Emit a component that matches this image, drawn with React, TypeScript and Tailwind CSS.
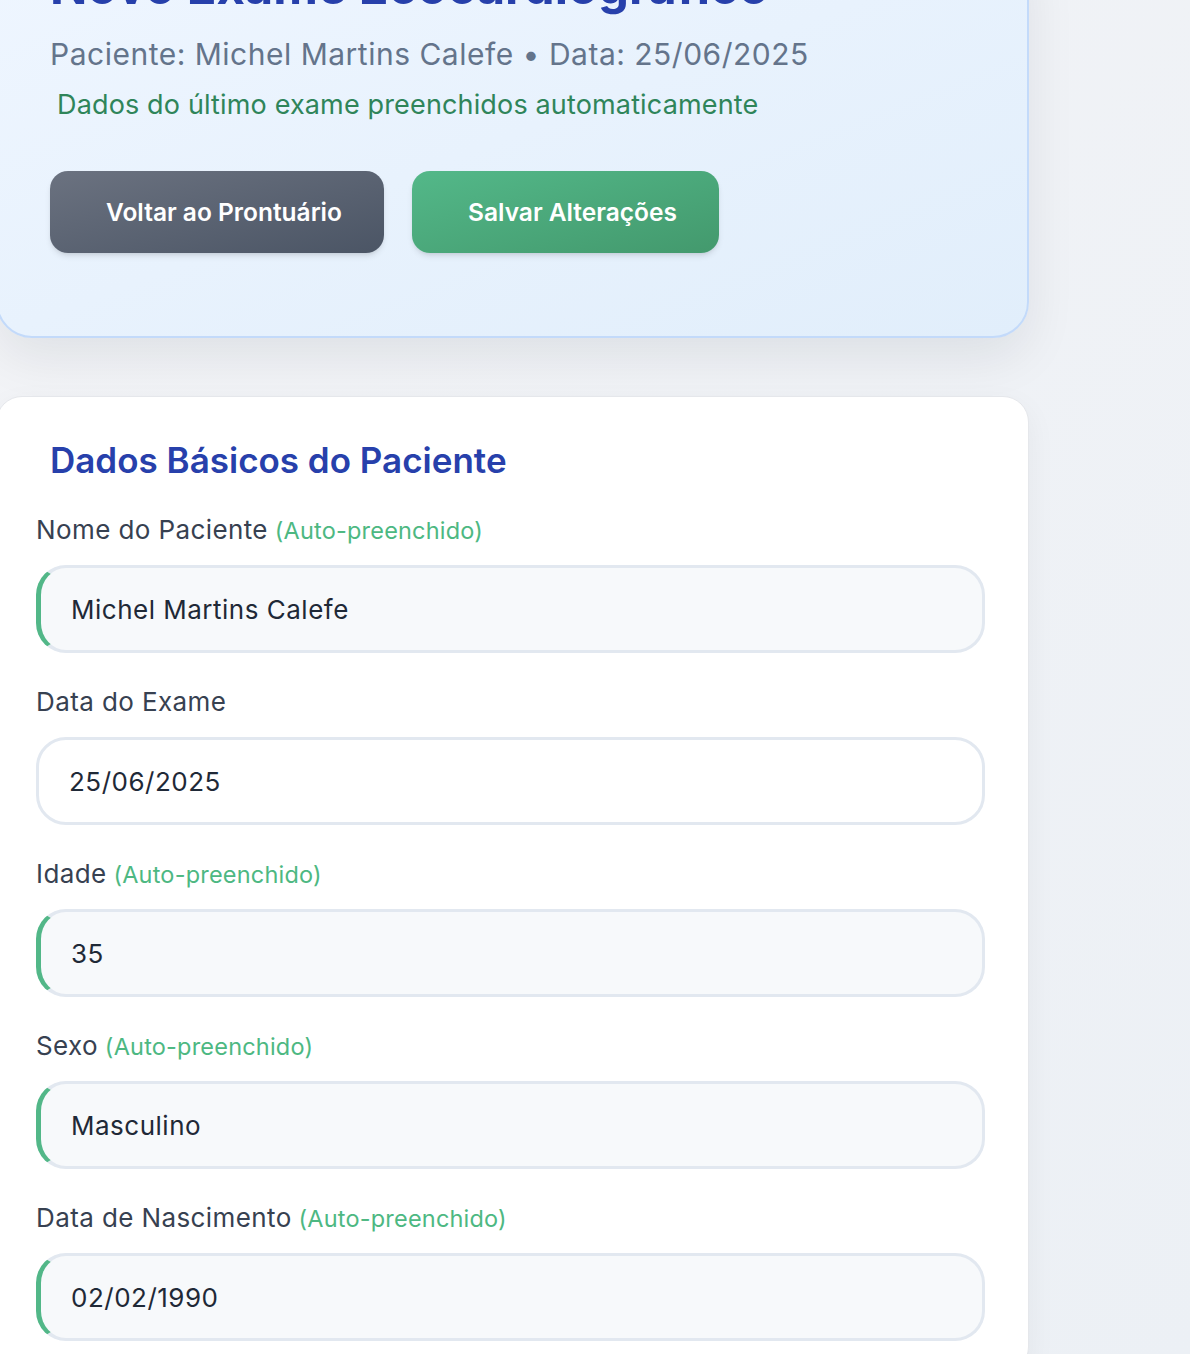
import React from "react";

interface Field {
  label: string;
  value: string;
  auto: boolean;
}

const fields: Field[] = [
  { label: "Nome do Paciente", value: "Michel Martins Calefe", auto: true },
  { label: "Data do Exame", value: "25/06/2025", auto: false },
  { label: "Idade", value: "35", auto: true },
  { label: "Sexo", value: "Masculino", auto: true },
  { label: "Data de Nascimento", value: "02/02/1990", auto: true },
];

const FormField: React.FC<{ field: Field }> = ({ field }) => (
  <div className="mb-[31px]">
    <label className="block h-[36px] text-[26px] leading-[36px] tracking-[0.4px] text-[#374151] mb-[17px]">
      {field.label}
      {field.auto && (
        <span className="text-[23.5px] leading-none tracking-[0.2px] text-[#4db882]"> (Auto-preenchido)</span>
      )}
    </label>
    <input
      readOnly
      defaultValue={field.value}
      className={`block w-full h-[88px] rounded-[30px] border-[3px] border-[#e2e8f0] px-[30px] text-[26px] tracking-[0.5px] text-[#1f2937] outline-none ${
        field.auto ? "bg-[#f7f9fb] border-l-[5px] border-l-[#52b788]" : "bg-white"
      }`}
    />
  </div>
);

export default function App() {
  return (
    <div
      className="min-h-screen overflow-hidden bg-gradient-to-br from-[#f3f4f7] to-[#ecf0f5]"
      style={{ fontFamily: "Inter, 'Noto Sans', sans-serif" }}
    >
      <div className="w-[1033px] -ml-[4px]">
        {/* Header card */}
        <div className="-mt-[66px] rounded-[36px] border-2 border-[#c3dafa] bg-gradient-to-br from-[#eff6ff] to-[#e1eefb] pl-[52px] pt-[22px] pb-[83px] shadow-[0_20px_50px_rgba(15,23,42,0.08)]">
          <h1 className="text-[49px] leading-[58px] font-bold text-[#2740ab]">
            Novo Exame Ecocardiográfico
          </h1>
          <p className="mt-[16px] text-[30px] leading-[45px] tracking-[0.5px] text-[#64748b]">
            Paciente: Michel Martins Calefe • Data: 25/06/2025
          </p>
          <p className="ml-[7px] mt-[8px] text-[27px] leading-[40px] tracking-[0.15px] text-[#2f855a]">
            Dados do último exame preenchidos automaticamente
          </p>
          <div className="mt-[46px] flex gap-[28px]">
            <button className="h-[82px] w-[334px] rounded-[18px] bg-gradient-to-br from-[#6b7280] to-[#4b5565] pl-[14px] text-[24.5px] font-semibold text-white shadow-md">
              Voltar ao Prontuário
            </button>
            <button className="h-[82px] w-[307px] rounded-[18px] bg-gradient-to-br from-[#53b889] to-[#43996d] pl-[14px] text-[24.5px] font-semibold text-white shadow-md">
              Salvar Alterações
            </button>
          </div>
        </div>

        {/* Form card */}
        <div className="mt-[58px] rounded-[26px] border border-[#e5e7eb] bg-white pl-[39px] pr-[43px] pt-[42px] shadow-[0_10px_30px_rgba(15,23,42,0.05)]">
          <h2 className="ml-[14px] mb-[31px] text-[35px] leading-[42px] font-semibold text-[#2740ab]">
            Dados Básicos do Paciente
          </h2>
          {fields.map((f) => (
            <FormField key={f.label} field={f} />
          ))}
        </div>
      </div>
    </div>
  );
}
